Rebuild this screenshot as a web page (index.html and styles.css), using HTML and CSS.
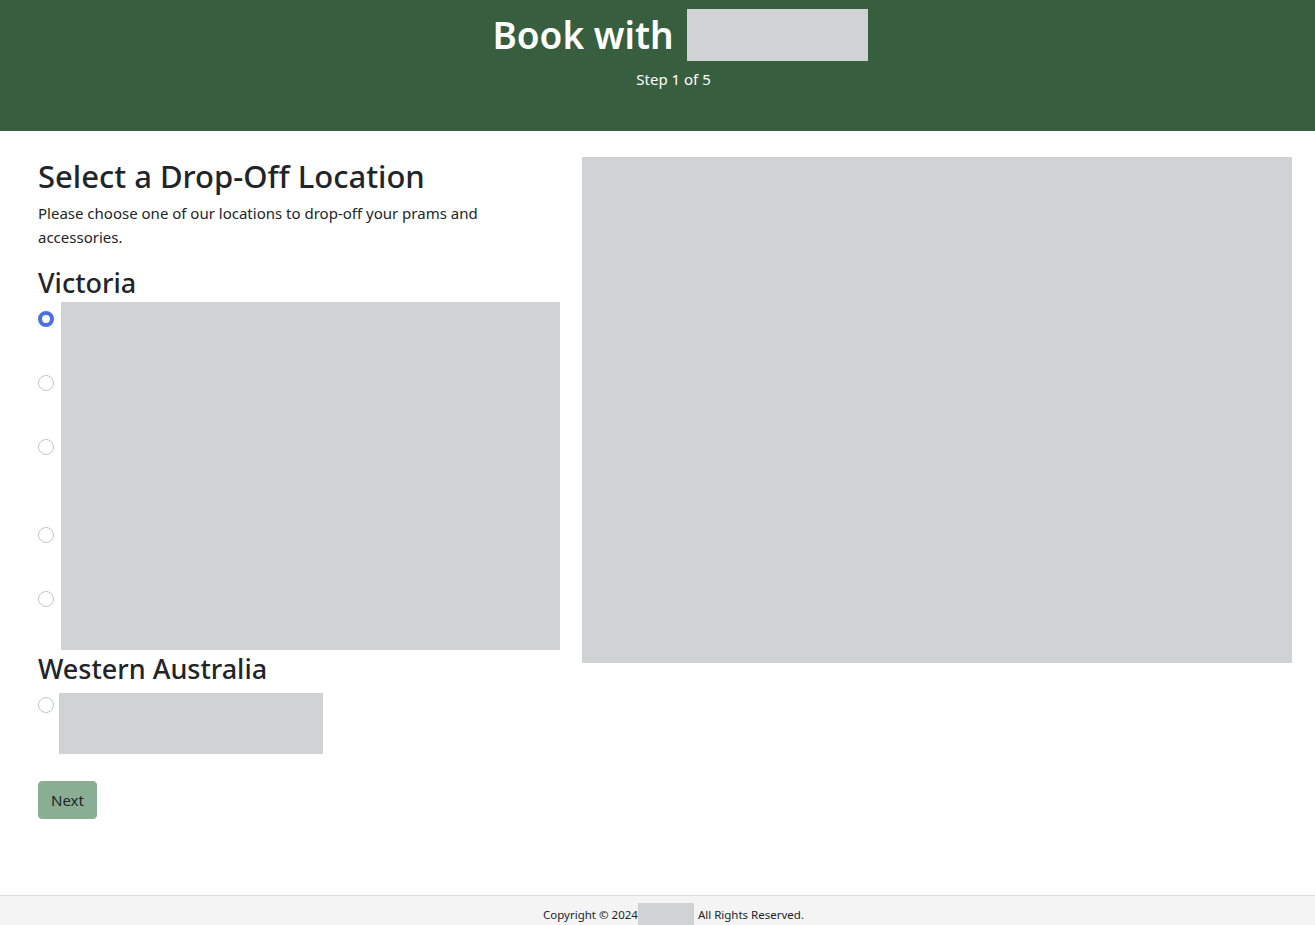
FILE: index.html
```html
<!DOCTYPE html>
<html lang="en">
<head>
<meta charset="utf-8">
<title>Book with</title>
<link rel="stylesheet" href="styles.css">
</head>
<body>
<header class="hero">
  <h1 class="hero-title">Book with <span class="redact redact-brand"></span></h1>
  <p class="hero-step">Step 1 of 5</p>
</header>

<main class="content">
  <section class="locations">
    <h2 class="page-title">Select a Drop-Off Location</h2>
    <p class="intro">Please choose one of our locations to drop-off your prams and accessories.</p>

    <h3 class="region">Victoria</h3>
    <div class="option-list">
      <label class="option h64"><input class="radio" type="radio" name="loc" checked><span class="option-text"></span></label>
      <label class="option h64"><input class="radio" type="radio" name="loc"><span class="option-text"></span></label>
      <label class="option h88"><input class="radio" type="radio" name="loc"><span class="option-text"></span></label>
      <label class="option h64"><input class="radio" type="radio" name="loc"><span class="option-text"></span></label>
      <label class="option h68"><input class="radio" type="radio" name="loc"><span class="option-text"></span></label>
    </div>

    <h3 class="region">Western Australia</h3>
    <div class="option-list wa">
      <label class="option-wa"><input class="radio" type="radio" name="loc"><span class="option-text-wa"></span></label>
    </div>

    <button class="btn-next" type="button">Next</button>
  </section>

  <section class="map"></section>
</main>

<footer class="footer">
  <span>Copyright © 2024</span><span class="redact redact-footer"></span><span>All Rights Reserved.</span>
</footer>
</body>
</html>
```

FILE: styles.css
```css
* { box-sizing: border-box; }
html, body { margin: 0; padding: 0; }
body {
  font-family: "Noto Sans", "Open Sans", sans-serif;
  color: #212529;
  background: #fff;
  min-height: 925px;
  display: flex;
  flex-direction: column;
}
.redact { background: #d1d2d4; display: inline-block; }

.hero {
  background: #375e3f;
  color: #fff;
  height: 131px;
  text-align: center;
  padding: 9px 0 0 32px;
}
.hero-title {
  margin: 0;
  font-size: 37px;
  font-weight: 600;
  line-height: 52px;
  display: flex;
  justify-content: center;
  align-items: center;
  gap: 13px;
  padding-left: 13px;
}
.redact-brand { width: 181px; height: 52px; }
.hero-step {
  margin: 6px 0 0;
  font-size: 15px;
  line-height: 24px;
}

.content {
  display: grid;
  grid-template-columns: 522px 710px;
  column-gap: 22px;
  padding: 26px 0 0 38px;
  flex: 1;
}
.page-title {
  margin: 0;
  font-size: 31px;
  font-weight: 500;
  line-height: 38px;
}
.intro {
  margin: 6px 0 0;
  font-size: 15px;
  line-height: 24px;
}
.region {
  margin: 17px 0 0;
  font-size: 27px;
  font-weight: 500;
  line-height: 34px;
}
.region + .option-list { margin-top: 2px; }
.option {
  display: flex;
  align-items: stretch;
}
.radio {
  appearance: none;
  -webkit-appearance: none;
  width: 16px;
  height: 16px;
  margin: 9px 7px 0 0;
  flex: none;
  border: 1px solid #c4c6c9;
  border-radius: 50%;
  background: #fff;
}
.radio:checked {
  background: #fff;
  border: 4.5px solid #4a6fe3;
}
.option-text { flex: 1; background: #d1d2d4; }
.h64 { height: 64px; }
.h88 { height: 88px; }
.h68 { height: 68px; }
.option-list + .region { margin-top: 2px; }
.region + .wa { margin-top: 7px; }
.option-wa { display: flex; align-items: flex-start; }
.option-wa .radio { margin: 4px 5px 0 0; }
.option-text-wa { width: 264px; height: 61px; background: #d1d2d4; }

.btn-next {
  margin-top: 27px;
  width: 59px;
  height: 38px;
  background: #8aae93;
  color: #212529;
  border: 1px solid #8aae93;
  border-radius: 4px;
  font-family: inherit;
  font-size: 15px;
  padding: 0;
}
.map {
  background: #d1d2d4;
  height: 506px;
}

.footer {
  margin-top: auto;
  height: 30px;
  background: #f4f4f4;
  border-top: 1px solid #dcdcdc;
  display: flex;
  justify-content: center;
  align-items: flex-end;
  font-size: 11.5px;
  color: #212529;
  line-height: 20px;
  padding-left: 32px;
}
.redact-footer { width: 56px; height: 22px; margin: 0 4px 0 0; }
```
